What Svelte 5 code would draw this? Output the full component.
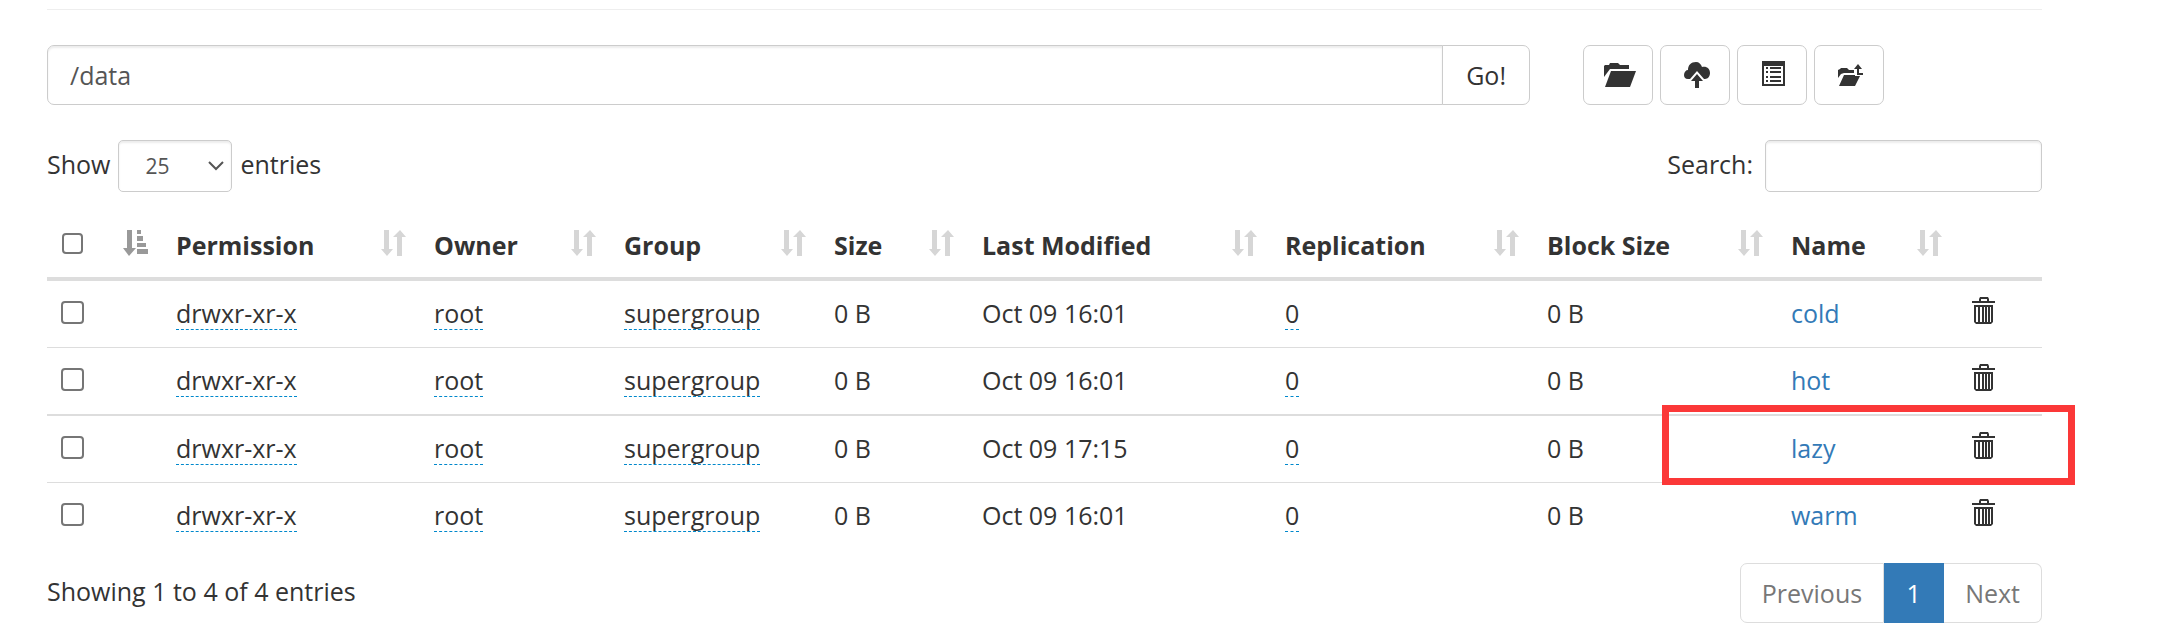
<script lang="ts">
	type Entry = {
		name: string;
		permission: string;
		owner: string;
		group: string;
		size: string;
		modified: string;
		replication: number;
		blockSize: string;
	};

	const columns = [
		{ label: '', width: 115 },
		{ label: 'Permission', width: 258 },
		{ label: 'Owner', width: 190 },
		{ label: 'Group', width: 210 },
		{ label: 'Size', width: 148 },
		{ label: 'Last Modified', width: 303 },
		{ label: 'Replication', width: 262 },
		{ label: 'Block Size', width: 244 },
		{ label: 'Name', width: 179 },
		{ label: '', width: 86 }
	];
	const totalWidth = columns.reduce((sum, column) => sum + column.width, 0);

	function directory(name: string, modified: string): Entry {
		return {
			name,
			permission: 'drwxr-xr-x',
			owner: 'root',
			group: 'supergroup',
			size: '0 B',
			modified,
			replication: 0,
			blockSize: '0 B'
		};
	}

	const entries: Entry[] = [
		directory('cold', 'Oct 09 16:01'),
		directory('hot', 'Oct 09 16:01'),
		directory('lazy', 'Oct 09 17:15'),
		directory('warm', 'Oct 09 16:01')
	];
	const highlighted = 'lazy';

	let path = $state('/data');
	let pageSize = $state('25');
	let search = $state('');
	let selected: string[] = $state([]);

	let visible = $derived(entries.filter((entry) => entry.name.includes(search)));

	function toggleAll(event: Event) {
		const box = event.currentTarget as HTMLInputElement;
		selected = box.checked ? entries.map((entry) => entry.name) : [];
	}
</script>

<main class="explorer">
	<hr />

	<div class="path-row">
		<form class="path-group" onsubmit={(event) => event.preventDefault()}>
			<input class="path-input" type="text" aria-label="Directory" bind:value={path} />
			<button class="go-button" type="submit">Go!</button>
		</form>
		<div class="toolbar">
			<button type="button" class="tool-button" aria-label="Create directory">
				<svg width="32" height="24" viewBox="0 0 32 24">
					<path d="M0 14V3l1-1h4l1-2h8l2 2h9v4H6L3 10z" />
					<path d="M7 8h25l-6 16H1z" />
				</svg>
			</button>
			<button type="button" class="tool-button" aria-label="Upload files">
				<svg width="26" height="26" viewBox="0 0 26 26">
					<path d="M4 17C1 17 0 15 0 13c0-3 2-5 4-5 0-5 3-8 8-8 3 0 5 2 6 5 5-1 8 2 8 6 0 3-2 6-5 6h-1l-7-8-7 8z" />
					<path d="M13 12l6 7h-4v7h-4v-7H7z" />
				</svg>
			</button>
			<button type="button" class="tool-button" aria-label="Cut and paste">
				<svg class="list-icon" width="23" height="25" viewBox="0 0 23 25">
					<path fill-rule="evenodd" d="M0 0h23v25H0zM2 5v18h19V5z" />
					<path d="M4 6h2v2H4zm4 0h11v2H8zM4 10h2v2H4zm4 0h11v2H8zM4 15h2v2H4zm4 0h11v2H8zM4 19h2v2H4zm4 0h11v2H8z" />
				</svg>
			</button>
			<button type="button" class="tool-button" aria-label="Parent directory">
				<svg width="26" height="22" viewBox="0 0 26 22">
					<path d="M0 14V6l2-1 1-1h6l2 2h5v3H6L3 10z" />
					<path d="M6 11h11v1h5l-5 10H1z" />
					<path d="M20 0l4 5h-3v4h4v2h-6V5h-3z" />
				</svg>
			</button>
		</div>
	</div>

	<div class="controls">
		<label class="length">
			<span>Show</span>
			<select bind:value={pageSize}>
				<option>25</option>
				<option>50</option>
				<option>100</option>
			</select>
			<span>entries</span>
		</label>
		<label class="search">
			<span>Search:</span>
			<input type="search" bind:value={search} />
		</label>
	</div>

	<table>
		<colgroup>
			{#each columns as column}
				<col style="width: {(column.width / totalWidth) * 100}%" />
			{/each}
		</colgroup>
		<thead>
			<tr>
				{#each columns as column, index}
					<th>
						{#if index === 0}
							<div class="heading">
								<input type="checkbox" class="check-all" aria-label="Select all" onchange={toggleAll} />
								<svg class="sort active" width="25" height="26" viewBox="0 0 25 26">
									<path d="M4 0h5v18h4l-7 8-6-8h4zM14 0h4v4h-4zM14 6h6v5h-6zM14 13h9v4h-9zM14 19h11v5H14z" />
								</svg>
							</div>
						{:else if column.label}
							<div class="heading">
								<span>{column.label}</span>
								<svg class="sort" width="25" height="26" viewBox="0 0 25 26">
									<path d="M3 0h5v19h4l-6 7-6-7h3zM19 0l6 7h-4v19h-5V7h-4z" />
								</svg>
							</div>
						{/if}
					</th>
				{/each}
			</tr>
		</thead>
		<tbody>
			{#each visible as entry (entry.name)}
				<tr class:marked={entry.name === highlighted}>
					<td>
						<input type="checkbox" value={entry.name} bind:group={selected} aria-label="Select {entry.name}" />
					</td>
					<td><span class="editable">{entry.permission}</span></td>
					<td><span class="editable">{entry.owner}</span></td>
					<td><span class="editable">{entry.group}</span></td>
					<td>{entry.size}</td>
					<td>{entry.modified}</td>
					<td><span class="editable">{entry.replication}</span></td>
					<td>{entry.blockSize}</td>
					<td><a href="#{entry.name}">{entry.name}</a></td>
					<td class="actions">
						<button type="button" class="trash" aria-label="Delete {entry.name}">
							<svg width="24" height="28" viewBox="0 0 24 28">
								<path fill-rule="evenodd" d="M0 4h7V2l1-2h8l1 2v2h6v2H0zM9 4h6V2H9z" />
								<path fill-rule="evenodd" d="M2 8h19v17l-2 2H4l-2-2zM4 10v15h2V10zM8 10v15h2V10zM12 10v15h1V10zM15 10v15h1V10zM18 10v15h1V10z" />
							</svg>
						</button>
						{#if entry.name === highlighted}
							<div class="highlight"></div>
						{/if}
					</td>
				</tr>
			{/each}
		</tbody>
	</table>

	<footer>
		<div class="summary">Showing 1 to {visible.length} of {entries.length} entries</div>
		<nav aria-label="Pagination">
			<button type="button">Previous</button>
			<button type="button" class="current">1</button>
			<button type="button">Next</button>
		</nav>
	</footer>
</main>

<style>
	:global(body) {
		background: #fff;
	}

	.explorer {
		padding: 9px 139px 10px 47px;
		font-family: 'Segoe UI', 'Open Sans', 'Noto Sans', sans-serif;
		font-size: 25px;
		line-height: 36px;
		color: #333;
	}

	.explorer * {
		box-sizing: border-box;
	}

	hr {
		margin: 0 0 35px;
		border: 0;
		border-top: 1px solid #eee;
	}

	input,
	select,
	button {
		margin: 0;
		font: inherit;
		color: inherit;
	}

	button {
		cursor: pointer;
	}

	svg {
		display: block;
		fill: currentColor;
	}

	/* path bar */
	.path-row {
		display: grid;
		grid-template-columns: repeat(12, 1fr);
		column-gap: 53px;
		margin-bottom: 35px;
	}

	.path-group {
		grid-column: span 9;
		display: flex;
	}

	.path-input {
		flex: 1;
		min-width: 0;
		height: 60px;
		padding: 0 22px;
		border: 1px solid #ccc;
		border-radius: 7px 0 0 7px;
		box-shadow: inset 0 2px 2px rgba(0, 0, 0, 0.075);
		color: #555;
	}

	.go-button {
		height: 60px;
		margin-left: -1px;
		padding: 0 23px;
		border: 1px solid #ccc;
		border-radius: 0 7px 7px 0;
		background: #fff;
	}

	.toolbar {
		grid-column: span 3;
		display: flex;
		gap: 7px;
	}

	.tool-button {
		display: flex;
		align-items: center;
		justify-content: center;
		width: 70px;
		height: 60px;
		padding: 0 0 0 3px;
		border: 1px solid #ccc;
		border-radius: 7px;
		background: #fff;
	}

	.list-icon {
		margin-bottom: 4px;
	}

	/* table controls */
	.controls {
		display: flex;
		justify-content: space-between;
		margin-bottom: 20px;
	}

	.length,
	.search {
		display: flex;
		align-items: center;
		gap: 8px;
	}

	.search {
		gap: 12px;
	}

	.controls span {
		padding-bottom: 5px;
	}

	.length select,
	.search input {
		height: 52px;
		border: 1px solid #ccc;
		border-radius: 5px;
		background-color: #fff;
		box-shadow: inset 0 2px 2px rgba(0, 0, 0, 0.075);
		color: #555;
		font-size: 21px;
	}

	.length select {
		width: 114px;
		padding: 0 26px;
		appearance: none;
		background-image: url("data:image/svg+xml,%3Csvg xmlns='http://www.w3.org/2000/svg' width='16' height='10'%3E%3Cpath d='M1 1l7 7 7-7' fill='none' stroke='%23555' stroke-width='2'/%3E%3C/svg%3E");
		background-repeat: no-repeat;
		background-position: right 7px center;
	}

	.search input {
		width: 277px;
		padding: 0 16px;
	}

	/* listing */
	table {
		width: 100%;
		table-layout: fixed;
		border-collapse: separate;
		border-spacing: 0;
	}

	th {
		height: 69px;
		padding: 0 14px;
		border-bottom: 4px solid #ddd;
		text-align: left;
		font-weight: 700;
	}

	.heading {
		display: flex;
		align-items: center;
		justify-content: space-between;
		white-space: nowrap;
	}

	.sort {
		color: #d6d6d6;
		margin-bottom: 4px;
	}

	.sort.active {
		color: #999;
	}

	td {
		height: 67px;
		padding: 0 14px 3px;
		border-top: 1px solid #ddd;
		vertical-align: middle;
	}

	tbody tr:first-child td {
		height: 66px;
		border-top: 0;
	}

	.marked td {
		height: 68px;
		border-top-width: 2px;
	}

	input[type='checkbox'] {
		display: block;
		width: 23px;
		height: 23px;
		appearance: none;
		border: 2px solid #767676;
		border-radius: 4px;
		background: #fff;
	}

	input[type='checkbox']:checked {
		background: #337ab7;
	}

	input.check-all {
		width: 21px;
		height: 21px;
		margin: 0 0 2px 1px;
	}

	.editable {
		display: inline-block;
		line-height: 32px;
		border-bottom: 1px dashed #08c;
	}

	a {
		color: #337ab7;
		text-decoration: none;
	}

	a:hover {
		text-decoration: underline;
	}

	.actions {
		position: relative;
	}

	.trash {
		display: block;
		margin-bottom: 4px;
		padding: 0 0 0 2px;
		border: 0;
		background: none;
	}

	.highlight {
		position: absolute;
		top: -11px;
		right: -33px;
		bottom: -3px;
		width: 413px;
		border: 7px solid #fb3838;
		pointer-events: none;
		z-index: 1;
	}

	/* summary and paging */
	footer {
		display: flex;
		justify-content: space-between;
		align-items: center;
		padding-top: 14px;
	}

	.summary {
		padding-bottom: 4px;
	}

	nav {
		display: flex;
	}

	nav button {
		height: 60px;
		min-width: 60px;
		padding: 0 21px;
		border: 1px solid #ddd;
		border-left: 0;
		background: #fff;
		color: #777;
	}

	nav button:first-child {
		border-left: 1px solid #ddd;
		border-radius: 7px 0 0 7px;
	}

	nav button:last-child {
		border-radius: 0 7px 7px 0;
	}

	nav .current {
		border-color: #337ab7;
		background: #337ab7;
		color: #fff;
	}
</style>
